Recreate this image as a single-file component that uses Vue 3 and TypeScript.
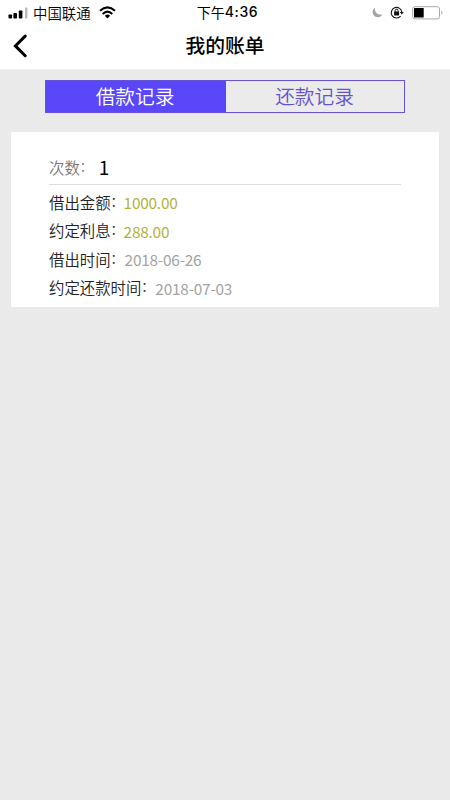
<script setup lang="ts">
import { ref } from 'vue'

interface LoanField {
  label: string
  value: string
  kind: 'amount' | 'date'
}

const tabs: string[] = ['借款记录', '还款记录']
const activeTab = ref(0)
const count = 1
const fields: LoanField[] = [
  { label: '借出金额', value: '1000.00', kind: 'amount' },
  { label: '约定利息', value: '288.00', kind: 'amount' },
  { label: '借出时间', value: '2018-06-26', kind: 'date' },
  { label: '约定还款时间', value: '2018-07-03', kind: 'date' },
]
</script>

<template>
  <div class="screen">
    <header class="top">
      <div class="status">
        <div class="status-left">
          <svg class="signal" width="20" height="12" viewBox="0 0 20 12">
            <rect x="0.5" y="7.5" width="3.6" height="4" rx="0.8" />
            <rect x="5.4" y="6" width="3.6" height="5.5" rx="0.8" />
            <rect x="10.8" y="3.5" width="3.6" height="8" rx="0.8" />
            <rect x="17" y="0.5" width="2.4" height="11" rx="0.8" fill="#b9b9b9" />
          </svg>
          <span class="carrier">中国联通</span>
          <svg class="wifi" width="17" height="13" viewBox="0 0 17 13" fill="none" stroke="#000" stroke-width="2.1">
            <path d="M1 4.8 Q8.5 -2 16 4.8" />
            <path d="M3.7 7.9 Q8.5 3.4 13.3 7.9" />
            <path d="M5.9 9.7 Q8.5 7.4 11.1 9.7 L8.5 12.4 Z" fill="#000" stroke="none" />
          </svg>
        </div>
        <div class="time">下午<span class="clock">4:36</span></div>
        <div class="status-right">
          <svg width="11" height="11" viewBox="0 0 11 11">
            <path d="M2.8 0.8 C-0.8 3 -0.1 10.2 5.8 10.2 C8 10.2 9.6 9.2 10.4 7.2 C5.8 8.6 2.6 5.2 2.8 0.8 Z" fill="#a5a5a5" />
          </svg>
          <svg class="lock" width="14" height="13" viewBox="0 0 14 13" fill="none" stroke="#111">
            <path d="M10.7 10 A5.3 5.3 0 1 1 11.8 6" stroke-width="1.1" />
            <path d="M9.8 5.9 H13.8 L11.8 8.4 Z" fill="#111" stroke="none" />
            <rect x="4.1" y="5.4" width="5" height="4" rx="0.5" fill="#111" stroke="none" />
            <path d="M5.1 6 V4.7 A1.5 1.5 0 0 1 8.1 4.7 V6" stroke-width="1" />
          </svg>
          <svg class="battery" width="32" height="14" viewBox="0 0 32 14">
            <rect x="0.7" y="0.7" width="26.8" height="12.2" rx="2.2" fill="#fff" stroke="#a8a8a8" />
            <rect x="2" y="2" width="9.7" height="9.5" rx="0.5" />
            <path d="M29.4 4.6 Q31.4 6.8 29.4 9 Z" fill="#a0a0a0" />
          </svg>
        </div>
      </div>
      <nav class="navbar">
        <svg class="back" width="15" height="24" viewBox="0 0 15 24" fill="none" stroke="#000" stroke-width="3" stroke-linecap="round">
          <path d="M12.2 2.1 L2.4 11.9 L12.2 21.7" />
        </svg>
        <h1 class="title">我的账单</h1>
      </nav>
    </header>

    <div class="tabs">
      <button
        v-for="(tab, i) in tabs"
        :key="tab"
        class="tab"
        :class="{ active: i === activeTab }"
        @click="activeTab = i"
      >{{ tab }}</button>
    </div>

    <section class="card">
      <div class="count">
        <span class="count-label">次数</span><span class="colon count-colon">：</span>
        <span class="count-value">{{ count }}</span>
      </div>
      <div v-for="field in fields" :key="field.label" class="field">
        <span>{{ field.label }}</span><span class="colon">：</span>
        <span class="value" :class="field.kind">{{ field.value }}</span>
      </div>
    </section>
  </div>
</template>

<style>
body {
  background: #eaeaea;
}
</style>

<style scoped>
.screen {
  width: 100%;
  height: 800px;
  overflow: hidden;
  background: #eaeaea;
  font-family: "Noto Sans CJK SC", sans-serif;
  color: #000;
}
.top {
  box-sizing: border-box;
  height: 70px;
  background: #fff;
  border-bottom: 1px solid #f3f3f3;
}
.status {
  height: 25px;
  display: grid;
  grid-template-columns: 1fr auto 1fr;
  align-items: center;
  padding: 0 6px 0 8px;
}
.status-left {
  display: flex;
  align-items: center;
}
.carrier {
  font-size: 14.4px;
  font-weight: 350;
  line-height: 24px;
  margin: 0 0 0 5px;
}
.wifi {
  margin: -1px 0 0 8px;
}
.time {
  display: flex;
  align-items: center;
  font-size: 14px;
  line-height: 24px;
  margin: -1px 0 0 3px;
}
.clock {
  font-family: Inter, sans-serif;
  font-weight: 500;
  letter-spacing: 0.6px;
}
.status-right {
  display: flex;
  align-items: center;
  justify-content: flex-end;
}
.lock {
  margin-left: 7px;
}
.battery {
  margin-left: 8px;
}
.navbar {
  height: 43px;
  display: grid;
  grid-template-columns: 40px 1fr 40px;
  align-items: center;
}
.back {
  margin: -2px 0 0 13px;
}
.title {
  margin: -4px 0 0;
  text-align: center;
  font-size: 19.8px;
  line-height: 30px;
  font-weight: 500;
}
.tabs {
  box-sizing: border-box;
  width: 360px;
  height: 33px;
  margin: 10px auto 19px;
  display: flex;
  border: 1px solid #6552d8;
}
.tab {
  flex: 1;
  padding: 0 1px 2px 0;
  border: 0;
  background: #ebebeb;
  color: #6552d0;
  font-family: inherit;
  font-size: 19.7px;
  font-weight: 350;
  line-height: 29px;
}
.tab.active {
  flex: 0 0 180px;
  padding-right: 2px;
  background: #5b47fa;
  color: #fff;
}
.card {
  box-sizing: border-box;
  height: 175px;
  margin: 0 11px;
  padding: 17px 38px 0;
  background: #fff;
}
.count {
  height: 35px;
  display: flex;
  align-items: center;
  border-bottom: 1px solid #dedede;
  font-size: 15.4px;
  font-weight: 350;
}
.count-label,
.count-colon {
  color: #777;
}
.count-value {
  font-size: 19px;
  font-weight: 400;
  margin-left: 6px;
}
.colon {
  width: 13px;
  font-size: 13px;
  line-height: 20px;
  padding-bottom: 2px;
  white-space: nowrap;
}
.field {
  height: 28.6px;
  display: flex;
  align-items: center;
  font-size: 15.4px;
  font-weight: 350;
  color: #222;
  position: relative;
  top: 2.3px;
}
.value {
  padding-top: 1px;
  font-size: 15.4px;
  font-weight: 400;
  letter-spacing: -0.22px;
}
.amount {
  color: #b0b340;
}
.date {
  margin-left: 1px;
  color: #a3a3a3;
}
</style>
